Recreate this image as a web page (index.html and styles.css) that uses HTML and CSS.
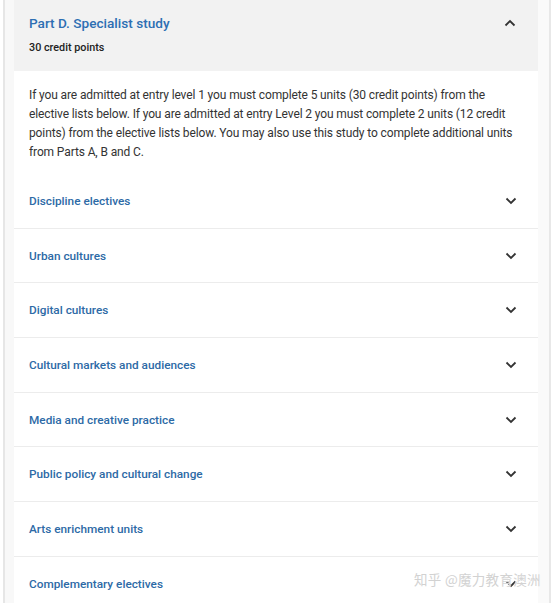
FILE: index.html
```html
<!DOCTYPE html>
<html>
<head>
<meta charset="utf-8">
<link rel="stylesheet" href="styles.css">
</head>
<body>
<div class="page">
  <div class="gutter">
    <div class="card">
      <div class="head">
        <div class="head-text">
          <div class="title">Part D. Specialist study</div>
          <div class="sub">30 credit points</div>
        </div>
        <svg class="chev" width="12" height="8" viewBox="0 0 12 8"><path d="M1.5 6.5 L6 2 L10.5 6.5" fill="none" stroke="#333" stroke-width="1.8"/></svg>
      </div>
      <p class="desc">If you are admitted at entry level 1 you must complete 5 units (30 credit points) from the elective lists below. If you are admitted at entry Level 2 you must complete 2 units (12 credit points) from the elective lists below. You may also use this study to complete additional units from Parts A, B and C.</p>
      <div class="list">
        <div class="row"><span>Discipline electives</span><svg class="chev" width="12" height="8" viewBox="0 0 12 8"><path d="M1.5 1.5 L6 6 L10.5 1.5" fill="none" stroke="#333" stroke-width="1.8"/></svg></div>
        <div class="row"><span>Urban cultures</span><svg class="chev" width="12" height="8" viewBox="0 0 12 8"><path d="M1.5 1.5 L6 6 L10.5 1.5" fill="none" stroke="#333" stroke-width="1.8"/></svg></div>
        <div class="row"><span>Digital cultures</span><svg class="chev" width="12" height="8" viewBox="0 0 12 8"><path d="M1.5 1.5 L6 6 L10.5 1.5" fill="none" stroke="#333" stroke-width="1.8"/></svg></div>
        <div class="row"><span>Cultural markets and audiences</span><svg class="chev" width="12" height="8" viewBox="0 0 12 8"><path d="M1.5 1.5 L6 6 L10.5 1.5" fill="none" stroke="#333" stroke-width="1.8"/></svg></div>
        <div class="row"><span>Media and creative practice</span><svg class="chev" width="12" height="8" viewBox="0 0 12 8"><path d="M1.5 1.5 L6 6 L10.5 1.5" fill="none" stroke="#333" stroke-width="1.8"/></svg></div>
        <div class="row"><span>Public policy and cultural change</span><svg class="chev" width="12" height="8" viewBox="0 0 12 8"><path d="M1.5 1.5 L6 6 L10.5 1.5" fill="none" stroke="#333" stroke-width="1.8"/></svg></div>
        <div class="row"><span>Arts enrichment units</span><svg class="chev" width="12" height="8" viewBox="0 0 12 8"><path d="M1.5 1.5 L6 6 L10.5 1.5" fill="none" stroke="#333" stroke-width="1.8"/></svg></div>
        <div class="row"><span>Complementary electives</span><svg class="chev" width="12" height="8" viewBox="0 0 12 8"><path d="M1.5 1.5 L6 6 L10.5 1.5" fill="none" stroke="#333" stroke-width="1.8"/></svg></div>
      </div>
    </div>
    <div class="right-edge"></div>
  </div>
  <div class="watermark">知乎 @魔力教育澳洲</div>
</div>
</body>
</html>
```
FILE: styles.css
```css
html, body {
  margin: 0;
  padding: 0;
  background: #ffffff;
  height: 603px;
  overflow: hidden;
}
.page {
  position: relative;
  height: 603px;
  padding-left: 3px;
  font-family: Roboto, "Noto Sans", sans-serif;
}
.gutter {
  display: flex;
  height: 603px;
  border-left: 2px solid #e6e6e6;
  background: #f8f8f8;
  padding-left: 9px;
  width: 546px;
  box-sizing: border-box;
}
.card {
  width: 524px;
  background: #ffffff;
  flex: none;
}
.right-edge {
  flex: none;
  width: 11px;
  border-right: 2px solid #e8e8e8;
  background: #fafafa;
}
.head {
  background: #f2f2f2;
  height: 71px;
  box-sizing: border-box;
  padding: 14px 22px 0 15px;
  display: flex;
  justify-content: space-between;
  align-items: flex-start;
}
.title {
  color: #2d6fb3;
  font-size: 13.6px;
  font-weight: 500;
  line-height: 18px;
}
.sub {
  color: #222;
  font-size: 10.8px;
  font-weight: 500;
  margin-top: 9px;
  line-height: 14px;
}
.head .chev {
  margin-top: 5px;
}
.desc {
  margin: 0;
  padding: 15px 16px 0 15px;
  height: 103px;
  box-sizing: border-box;
  font-size: 12px;
  letter-spacing: -0.12px;
  line-height: 19px;
  color: #333;
}
.row {
  height: 54.7px;
  box-sizing: border-box;
  border-bottom: 1px solid #ececec;
  display: flex;
  align-items: center;
  justify-content: space-between;
  padding: 0 21px 0 15px;
  color: #2d6aa6;
  font-size: 11.8px;
  font-weight: 500;
}
.watermark {
  position: absolute;
  left: 414px;
  top: 569px;
  white-space: nowrap;
  font-family: "Noto Sans CJK SC", sans-serif;
  font-size: 13.5px;
  color: #d2d2d2;
  letter-spacing: 0.3px;
  text-shadow: 0 0 1px #fff, 0 0 1px #fff;
}
```
